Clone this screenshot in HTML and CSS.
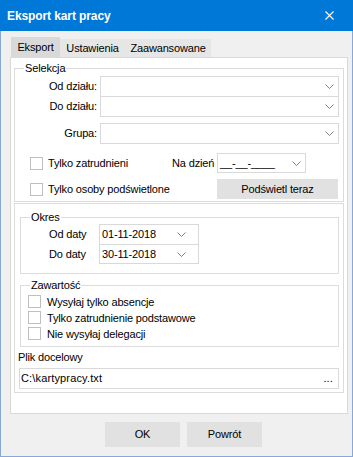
FILE: index.html
```html
<!DOCTYPE html>
<html lang="pl">
<head>
  <meta charset="UTF-8">
  <link rel="stylesheet" href="styles.css">
</head>
<body>

<div class="window">
  <div class="titlebar">
    <span class="title">Eksport kart pracy</span>
    <svg class="close" width="9" height="9" viewBox="0 0 9 9"><path d="M0.5 0.5L8.5 8.5M8.5 0.5L0.5 8.5" stroke="#fff" stroke-width="1.1"/></svg>
  </div>

  <div class="client">
    <div class="tabs">
      <div class="tab active tab-eksport">Eksport</div>
      <div class="tab tab-ustawienia">Ustawienia</div>
      <div class="tab tab-zaawansowane">Zaawansowane</div>
    </div>

    <div class="tab-page">
      <fieldset class="group selekcja">
        <legend>Selekcja</legend>
        <div class="field-row first">
          <span class="field-label">Od działu:</span>
          <div class="combo"><svg class="chevron" width="9" height="5" viewBox="0 0 9 5"><path d="M0.5 0.5L4.5 4.5L8.5 0.5" fill="none" stroke="#808080"/></svg></div>
        </div>
        <div class="field-row joined">
          <span class="field-label">Do działu:</span>
          <div class="combo"><svg class="chevron" width="9" height="5" viewBox="0 0 9 5"><path d="M0.5 0.5L4.5 4.5L8.5 0.5" fill="none" stroke="#808080"/></svg></div>
        </div>
        <div class="field-row spaced">
          <span class="field-label">Grupa:</span>
          <div class="combo"><svg class="chevron" width="9" height="5" viewBox="0 0 9 5"><path d="M0.5 0.5L4.5 4.5L8.5 0.5" fill="none" stroke="#808080"/></svg></div>
        </div>

        <div class="check-row row-zatrudnieni">
          <span class="checkbox"></span>
          <span class="check-label short">Tylko zatrudnieni</span>
          <span class="day-label">Na dzień</span>
          <div class="date-box day">
            <span>__-__-____</span>
            <svg class="chevron" width="9" height="5" viewBox="0 0 9 5"><path d="M0.5 0.5L4.5 4.5L8.5 0.5" fill="none" stroke="#808080"/></svg>
          </div>
        </div>
        <div class="check-row row-podswietlone">
          <span class="checkbox"></span>
          <span class="check-label long">Tylko osoby podświetlone</span>
          <button class="btn btn-highlight">Podświetl teraz</button>
        </div>
      </fieldset>

      <div class="sub-panel">
        <fieldset class="group okres">
          <legend>Okres</legend>
          <div class="date-row first">
            <span class="date-label">Od daty</span>
            <div class="date-box period">
              <span>01-11-2018</span>
              <svg class="chevron" width="9" height="5" viewBox="0 0 9 5"><path d="M0.5 0.5L4.5 4.5L8.5 0.5" fill="none" stroke="#808080"/></svg>
            </div>
          </div>
          <div class="date-row joined">
            <span class="date-label">Do daty</span>
            <div class="date-box period">
              <span>30-11-2018</span>
              <svg class="chevron" width="9" height="5" viewBox="0 0 9 5"><path d="M0.5 0.5L4.5 4.5L8.5 0.5" fill="none" stroke="#808080"/></svg>
            </div>
          </div>
        </fieldset>

        <fieldset class="group zawartosc">
          <legend>Zawartość</legend>
          <div class="option-row first"><span class="checkbox"></span><span>Wysyłaj tylko absencje</span></div>
          <div class="option-row"><span class="checkbox"></span><span>Tylko zatrudnienie podstawowe</span></div>
          <div class="option-row"><span class="checkbox"></span><span>Nie wysyłaj delegacji</span></div>
        </fieldset>

        <div class="file-label">Plik docelowy</div>
        <div class="file-box">
          <span>C:\kartypracy.txt</span>
          <span class="dots">...</span>
        </div>
      </div>
    </div>

    <div class="buttons">
      <button class="btn btn-dialog">OK</button>
      <button class="btn btn-dialog">Powrót</button>
    </div>
  </div>
</div>

</body>
</html>
```

FILE: styles.css
```css
body {
  margin: 0;
  font-family: "Liberation Sans", Arial, sans-serif;
  font-size: 11px;
  line-height: 13px;
  letter-spacing: -0.15px;
  color: #000;
  background: #f0f0f0;
}
.window {
  width: 353px;
  height: 457px;
  display: flex;
  flex-direction: column;
}
.titlebar {
  height: 31px;
  box-sizing: border-box;
  padding: 2px 19px 0 7px;
  background: #0078d7;
  color: #fff;
  display: flex;
  align-items: center;
  justify-content: space-between;
}
.title {
  font-size: 12px;
  font-weight: bold;
  letter-spacing: -0.1px;
}
.close {
  display: block;
  margin-bottom: 2px;
}
.client {
  flex: 1;
  background: #f0f0f0;
  border: 1px solid #88a9d8;
  border-top: 0;
  padding: 6px 0 0 9px;
}
.tabs {
  display: flex;
  align-items: flex-end;
  height: 20px;
  margin-left: 1px;
}
.tab {
  height: 18px;
  line-height: 18px;
  text-align: center;
  background: #e6e6e6;
}
.tab.active {
  height: 20px;
  line-height: 21px;
  background: #d9d9d9;
}
.tab-eksport { width: 49px; }
.tab-ustawienia { width: 65px; }
.tab-zaawansowane { width: 86px; }
.tab-page {
  width: 338px;
  height: 357px;
  box-sizing: border-box;
  border: 1px solid #d9d9d9;
  background: #fff;
  padding: 4px 3px 0;
}
.group {
  margin: 0;
  padding: 0;
  border: 1px solid #dcdcdc;
  min-inline-size: 0;
  box-sizing: border-box;
}
.group legend {
  padding: 0 1px;
  margin-left: 9px;
  line-height: 13px;
}
.selekcja {
  width: 330px;
  padding-bottom: 2px;
}
.field-row {
  display: flex;
  align-items: center;
}
.field-row.first { margin-top: 1px; }
.field-row.joined { margin-top: -1px; }
.field-row.spaced { margin-top: 6px; }
.field-label {
  width: 82px;
  margin-right: 3px;
  text-align: right;
}
.combo {
  width: 239px;
  height: 21px;
  box-sizing: border-box;
  border: 1px solid #d9d9d9;
  display: flex;
  align-items: center;
  justify-content: flex-end;
  padding-right: 4px;
}
.chevron {
  display: block;
}
.check-row {
  display: flex;
  align-items: center;
  height: 20px;
}
.row-zatrudnieni { margin-top: 9px; }
.row-podswietlone { margin-top: 6px; }
.checkbox {
  width: 13px;
  height: 13px;
  box-sizing: border-box;
  border: 1px solid #bfbfbf;
  background: #fff;
  flex-shrink: 0;
}
.check-row .checkbox {
  margin-left: 15px;
  margin-right: 5px;
}
.check-label.short { width: 124px; }
.check-label.long { width: 169px; }
.day-label { width: 45px; }
.date-box {
  height: 20px;
  box-sizing: border-box;
  border: 1px solid #d9d9d9;
  display: flex;
  align-items: center;
  justify-content: space-between;
  padding-left: 2px;
}
.date-box.day {
  width: 89px;
  padding-right: 4px;
}
.date-box.period {
  width: 100px;
  padding-right: 12px;
}
.btn {
  font: inherit;
  letter-spacing: inherit;
  color: #000;
  background: #e1e1e1;
  border: 1px solid #e1e1e1;
  padding: 0;
  margin: 0;
}
.btn-highlight {
  width: 121px;
  height: 20px;
}
.sub-panel {
  width: 330px;
  height: 190px;
  box-sizing: border-box;
  margin-top: 1px;
  border: 1px solid #dcdcdc;
  padding: 0 4px 3px 3px;
}
.okres {
  width: 319px;
  margin: 7px 0 0 2px;
  padding-bottom: 9px;
}
.date-row {
  display: flex;
  align-items: center;
}
.date-row.first .date-box { height: 21px; }
.date-row.joined { margin-top: -1px; }
.date-label {
  width: 50px;
  margin-left: 28px;
}
.zawartosc {
  width: 319px;
  margin: 5px 0 0 2px;
  padding-bottom: 3px;
}
.option-row {
  display: flex;
  align-items: flex-start;
  height: 16px;
  line-height: 14px;
}
.option-row.first { margin-top: 3px; }
.option-row .checkbox {
  margin-left: 7px;
  margin-right: 6px;
}
.file-label {
  margin-top: 4px;
}
.file-box {
  width: 320px;
  height: 21px;
  box-sizing: border-box;
  margin: 4px 0 0 1px;
  border: 1px solid #d9d9d9;
  display: flex;
  align-items: center;
  justify-content: space-between;
  padding: 0 5px 0 1px;
  letter-spacing: 0.15px;
}
.buttons {
  display: flex;
  gap: 7px;
  margin: 8px 0 0 95px;
}
.btn-dialog {
  width: 75px;
  height: 25px;
}
```
